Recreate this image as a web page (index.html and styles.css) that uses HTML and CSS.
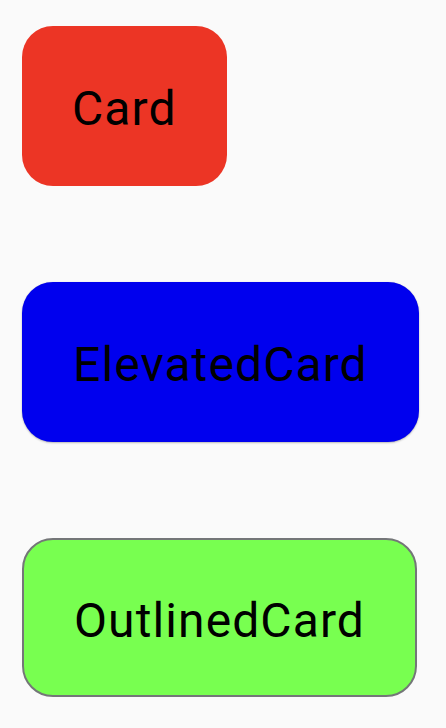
FILE: index.html
```html
<!DOCTYPE html>
<html>
<head>
<meta charset="utf-8">
<link rel="stylesheet" href="styles.css">
</head>
<body>
<main class="list">
  <div class="card card-filled"><span class="label">Card</span></div>
  <div class="card card-elevated"><span class="label">ElevatedCard</span></div>
  <div class="card card-outlined"><span class="label">OutlinedCard</span></div>
</main>
</body>
</html>
```
FILE: styles.css
```css
html, body {
  margin: 0;
  padding: 0;
  background: #fafafa;
}
.list {
  display: flex;
  flex-direction: column;
  align-items: flex-start;
  gap: 96px;
  padding: 26px 0 0 22px;
}
.card {
  display: flex;
  align-items: center;
  justify-content: center;
  box-sizing: border-box;
  height: 160px;
  padding: 6px 51px 0;
  border-radius: 31px;
}
.label {
  font-family: Roboto, "Noto Sans", sans-serif;
  font-size: 48px;
  line-height: 56px;
  color: #000;
  letter-spacing: 1.1px;
}
.card-filled {
  background: #ec3525;
  padding: 6px 50px 0;
}
.card-elevated {
  background: #0000ee;
  box-shadow: 0 1px 2px rgba(0,0,0,0.25), 0 0 1px rgba(0,0,0,0.15);
}
.card-outlined {
  background: #78ff50;
  border: 2px solid #747678;
  height: 159px;
  padding: 6px 50px 0;
}
```
